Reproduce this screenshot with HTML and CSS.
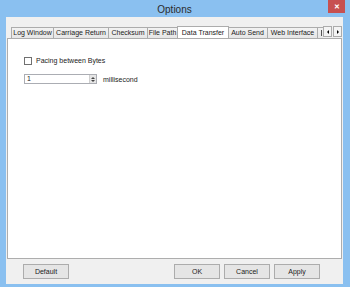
FILE: index.html
```html
<!DOCTYPE html>
<html lang="en">
<head>
<meta charset="UTF-8" />
<title>Options</title>
<link rel="stylesheet" href="styles.css">
</head>
<body>
  <div class="window">
    <div class="titlebar">
      <span class="title">Options</span>
      <span class="close">&#x2715;</span>
    </div>
    <div class="client">
      <div class="tabstrip">
        <div class="tabs">
          <div class="tab w-log">Log Window</div>
          <div class="tab w-cr">Carriage Return</div>
          <div class="tab w-chk">Checksum</div>
          <div class="tab w-fp">File Path</div>
          <div class="tab active w-dt">Data Transfer</div>
          <div class="tab w-as">Auto Send</div>
          <div class="tab w-web">Web Interface</div>
          <div class="tab w-more"><span class="stub"></span></div>
        </div>
        <div class="scroller">
          <span class="arrow"><i class="tri left"></i></span>
          <span class="arrow"><i class="tri right"></i></span>
        </div>
      </div>
      <div class="panel">
        <label class="check-row">
          <span class="checkbox"></span>
          <span>Pacing between Bytes</span>
        </label>
        <div class="spin-row">
          <div class="spin">
            <span class="spin-value">1</span>
            <span class="spin-btns">
              <i class="tri up"></i>
              <i class="tri down"></i>
            </span>
          </div>
          <span class="unit">millisecond</span>
        </div>
      </div>
      <div class="buttons">
        <button class="btn">Default</button>
        <div class="btn-group">
          <button class="btn">OK</button>
          <button class="btn">Cancel</button>
          <button class="btn">Apply</button>
        </div>
      </div>
    </div>
  </div>
</body>
</html>
```

FILE: styles.css
```css
* { box-sizing: border-box; margin: 0; padding: 0; }
body { width: 350px; height: 287px; overflow: hidden; font-family: 'Liberation Sans', Arial, sans-serif; font-size: 7px; color: #222; }

.window { width: 350px; height: 287px; background: #8ac0f0; padding: 0 7px 3px 6px; display: flex; flex-direction: column; }
.titlebar { height: 17px; display: flex; align-items: center; justify-content: center; position: relative; }
.title { font-size: 10px; color: #2b2b2b; padding-top: 1px; }
.close { position: absolute; top: 0; right: -2px; width: 17px; height: 13px; background: #c75050; color: #fff; font-size: 7px; font-weight: bold; display: flex; align-items: center; justify-content: center; }

.client { flex: 1; background: #f0f0f0; display: flex; flex-direction: column; }

/* tabs */
.tabstrip { display: flex; align-items: flex-end; height: 21px; padding-left: 5px; margin-right: 1px; }
.tabs { display: flex; align-items: flex-end; width: 313px; overflow: hidden; height: 13px; padding-left: 1px; }
.tab { flex: none; height: 11px; line-height: 10px; text-align: center; white-space: nowrap; overflow: hidden; background: linear-gradient(#f2f2f2, #e6e6e6); border: 1px solid #acacac; border-bottom: none; margin-left: -1px; }
.tab.active { height: 13px; line-height: 11px; background: #fff; margin: 0 -1px -1px -1px; position: relative; z-index: 2; }
.w-log { width: 43px; }
.w-cr { width: 56px; }
.w-chk { width: 40px; }
.w-fp { width: 31px; }
.w-dt { width: 52px; }
.w-as { width: 41px; }
.w-web { width: 51px; }
.w-more { width: 40px; padding-left: 3px; text-align: left; }
.stub { display: inline-block; width: 1px; height: 6px; background: #555; vertical-align: middle; }

.scroller { display: flex; height: 11px; margin-bottom: 1px; gap: 1px; }
.arrow { width: 9px; height: 11px; border: 1px solid #acacac; background: #f4f4f4; display: flex; align-items: center; justify-content: center; }
.tri { width: 0; height: 0; border: 2px solid transparent; }
.tri.left { border-right: 2px solid #000; border-left: none; }
.tri.right { border-left: 2px solid #000; border-right: none; }
.tri.up { border-bottom: 2px solid #444; border-top: none; }
.tri.down { border-top: 2px solid #444; border-bottom: none; }

.panel { height: 221px; margin: 0 1px 0 1px; background: #fff; border: 1px solid #adadad; padding: 17px 0 0 16px; display: flex; flex-direction: column; gap: 9px; }
.check-row { display: flex; align-items: center; gap: 4px; height: 9px; }
.checkbox { width: 8px; height: 8px; border: 1px solid #707070; background: #fff; }
.spin-row { display: flex; align-items: center; gap: 6px; }
.spin { width: 73px; height: 10px; border: 1px solid #abadb3; display: flex; align-items: center; justify-content: space-between; padding-left: 2px; }
.spin-value { line-height: 8px; }
.spin-btns { width: 7px; height: 8px; background: #e6e6e6; border-left: 1px solid #cfcfcf; display: flex; flex-direction: column; align-items: center; justify-content: center; gap: 1px; }

/* buttons */
.buttons { display: flex; justify-content: space-between; align-items: flex-start; padding: 5px 23px 0 17px; }
.btn-group { display: flex; gap: 4px; }
.btn { width: 46px; height: 15px; font-family: inherit; font-size: 7px; color: #222; background: #e5e5e5; border: 1px solid #acacac; }
```
